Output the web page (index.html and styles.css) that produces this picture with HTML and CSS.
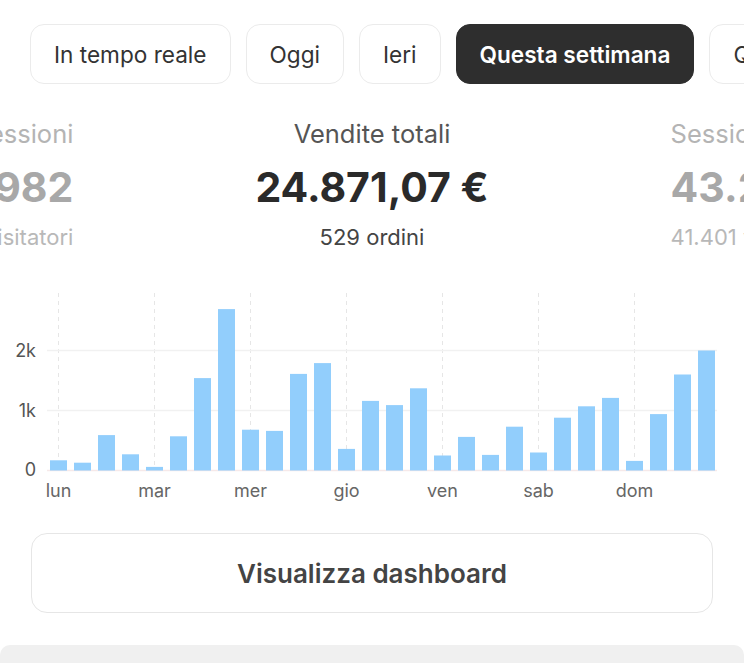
FILE: index.html
```html
<!DOCTYPE html>
<html>
<head>
<meta charset="utf-8">
<meta name="viewport" content="initial-scale=1.0, width=device-width">
<title>Panoramica</title>
<link rel="stylesheet" href="styles.css">
</head>
<body>

<div class="tabs">
  <button type="button" class="tab">In tempo reale</button>
  <button type="button" class="tab">Oggi</button>
  <button type="button" class="tab">Ieri</button>
  <button type="button" class="tab active">Questa settimana</button>
  <button type="button" class="tab">Questo mese</button>
</div>

<div class="stats">
  <div class="stat side left">
    <div class="stat-label">Sessioni</div>
    <div class="stat-value">1.982</div>
    <div class="stat-sub">1.405 visitatori</div>
  </div>
  <div class="stat main">
    <div class="stat-label">Vendite totali</div>
    <div class="stat-value">24.871,07 €</div>
    <div class="stat-sub">529 ordini</div>
  </div>
  <div class="stat side right">
    <div class="stat-label">Sessioni</div>
    <div class="stat-value">43.207</div>
    <div class="stat-sub">41.401 visitatori</div>
  </div>
</div>

<svg class="chart" viewBox="0 0 744 230" xmlns="http://www.w3.org/2000/svg">
  <!-- one dashed line per day -->
  <path class="day" d="M58.5 13 L58.5 190" />
  <path class="day" d="M154.5 13 L154.5 190" />
  <path class="day" d="M250.5 13 L250.5 190" />
  <path class="day" d="M346.5 13 L346.5 190" />
  <path class="day" d="M442.5 13 L442.5 190" />
  <path class="day" d="M538.5 13 L538.5 190" />
  <path class="day" d="M634.5 13 L634.5 190" />

  <path class="grid" d="M47 70.5 L717 70.5" />
  <path class="grid" d="M47 130.5 L717 130.5" />
  <path class="base" d="M47 190.5 L717 190.5" />

  <!-- 4 bars per day, 60px per 1k -->
  <g class="bars">
    <rect x="50" y="180.3" width="17" height="10.2" />
    <rect x="74" y="182.7" width="17" height="7.8" />
    <rect x="98" y="155.1" width="17" height="35.4" />
    <rect x="122" y="174.3" width="17" height="16.2" />
    <rect x="146" y="186.9" width="17" height="3.6" />
    <rect x="170" y="156.3" width="17" height="34.2" />
    <rect x="194" y="98.1" width="17" height="92.4" />
    <rect x="218" y="29.1" width="17" height="161.4" />
    <rect x="242" y="149.7" width="17" height="40.8" />
    <rect x="266" y="150.9" width="17" height="39.6" />
    <rect x="290" y="93.9" width="17" height="96.6" />
    <rect x="314" y="83.1" width="17" height="107.4" />
    <rect x="338" y="168.9" width="17" height="21.6" />
    <rect x="362" y="120.9" width="17" height="69.6" />
    <rect x="386" y="125.1" width="17" height="65.4" />
    <rect x="410" y="108.3" width="17" height="82.2" />
    <rect x="434" y="175.5" width="17" height="15" />
    <rect x="458" y="156.9" width="17" height="33.6" />
    <rect x="482" y="174.9" width="17" height="15.6" />
    <rect x="506" y="146.7" width="17" height="43.8" />
    <rect x="530" y="172.5" width="17" height="18" />
    <rect x="554" y="137.7" width="17" height="52.8" />
    <rect x="578" y="126.3" width="17" height="64.2" />
    <rect x="602" y="117.9" width="17" height="72.6" />
    <rect x="626" y="180.9" width="17" height="9.6" />
    <rect x="650" y="134.1" width="17" height="56.4" />
    <rect x="674" y="94.5" width="17" height="96" />
    <rect x="698" y="70.5" width="17" height="120" />
  </g>

  <g class="ylabels">
    <text x="36" y="76.5">2k</text>
    <text x="36" y="136.5">1k</text>
    <text x="36" y="195.5">0</text>
  </g>
  <g class="xlabels">
    <text x="58.5" y="216.5">lun</text>
    <text x="154.5" y="216.5">mar</text>
    <text x="250.5" y="216.5">mer</text>
    <text x="346.5" y="216.5">gio</text>
    <text x="442.5" y="216.5">ven</text>
    <text x="538.5" y="216.5">sab</text>
    <text x="634.5" y="216.5">dom</text>
  </g>
</svg>

<button type="button" class="dashboard">Visualizza dashboard</button>

<div class="next-card"></div>

</body>
</html>
```

FILE: styles.css
```css
html,body,div,svg{margin:0;padding:0;}
*{box-sizing:border-box;}
body{
  color:#333;
  font-family:Inter,"Noto Sans",sans-serif;
  background:#fff;
  width:744px;
  overflow:hidden;
}
button{font-family:inherit;cursor:pointer;}

.tabs{
  display:flex;
  gap:15px;
  padding:24px 0 0 30px;
  white-space:nowrap;
}
.tab{
  flex:none;
  height:60px;
  padding:0 23px;
  font-size:22.6px;
  color:#333;
  background:#fff;
  border:1px solid #ebebeb;
  border-radius:14px;
}
.tab.active{
  background:#2e2e2e;
  border-color:#2e2e2e;
  color:#fff;
  font-weight:600;
}

.stats{
  display:grid;
  grid-template-columns:1fr auto 1fr;
  column-gap:182px;
  margin-top:35px;
  white-space:nowrap;
}
.stat{display:flex;flex-direction:column;align-items:center;min-width:0;}
.stat.left{align-items:flex-end;}
.stat.right{align-items:flex-start;}
.stat-label{font-size:25.5px;line-height:30px;color:#555;}
.stat-value{font-size:41px;line-height:48px;font-weight:700;color:#2a2a2a;margin-top:14px;}
.stat-sub{font-size:22px;line-height:28px;color:#444;margin-top:12px;}
.side .stat-label{color:#b4b4b4;}
.side .stat-value{color:#a8a8a8;}
.side .stat-sub{color:#b8b8b8;}

.chart{
  display:block;
  width:744px;
  height:230px;
  margin-top:29px;
}
.chart .day{stroke:#e6e6e6;stroke-width:1px;stroke-dasharray:4 4;fill:none;}
.chart .grid{stroke:#f1f1f1;stroke-width:1.5px;fill:none;}
.chart .base{stroke:#f6e9e9;stroke-width:1.5px;fill:none;}
.bars rect{fill:#92cefc;}
.ylabels text{font-size:18px;fill:#555;text-anchor:end;}
.xlabels text{font-size:18px;fill:#666;text-anchor:middle;}

.dashboard{
  display:block;
  width:682px;
  height:80px;
  margin:23px 0 0 31px;
  font-size:26px;
  font-weight:600;
  color:#444;
  background:#fff;
  border:1.5px solid #e6e6e6;
  border-radius:16px;
}
.next-card{
  height:40px;
  margin-top:32px;
  background:#f0f0f0;
  border-radius:10px;
}
```
